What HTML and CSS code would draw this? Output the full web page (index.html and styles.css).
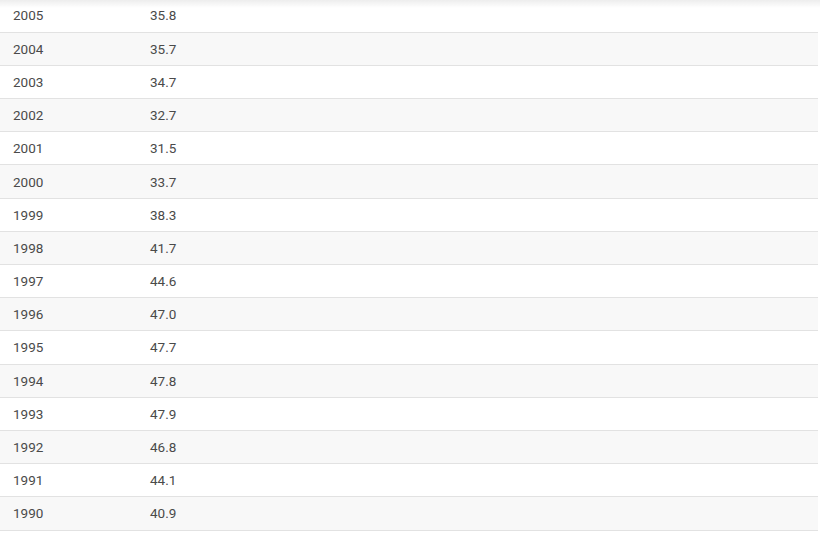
FILE: index.html
```html
<!DOCTYPE html>
<html>
<head>
<meta charset="utf-8">
<link rel="stylesheet" href="styles.css">
</head>
<body>
<div class="topshadow"></div>
<table class="data">
<tbody>
<tr><td class="year">2005</td><td>35.8</td><td class="fill"></td></tr>
<tr><td class="year">2004</td><td>35.7</td><td class="fill"></td></tr>
<tr><td class="year">2003</td><td>34.7</td><td class="fill"></td></tr>
<tr><td class="year">2002</td><td>32.7</td><td class="fill"></td></tr>
<tr><td class="year">2001</td><td>31.5</td><td class="fill"></td></tr>
<tr><td class="year">2000</td><td>33.7</td><td class="fill"></td></tr>
<tr><td class="year">1999</td><td>38.3</td><td class="fill"></td></tr>
<tr><td class="year">1998</td><td>41.7</td><td class="fill"></td></tr>
<tr><td class="year">1997</td><td>44.6</td><td class="fill"></td></tr>
<tr><td class="year">1996</td><td>47.0</td><td class="fill"></td></tr>
<tr><td class="year">1995</td><td>47.7</td><td class="fill"></td></tr>
<tr><td class="year">1994</td><td>47.8</td><td class="fill"></td></tr>
<tr><td class="year">1993</td><td>47.9</td><td class="fill"></td></tr>
<tr><td class="year">1992</td><td>46.8</td><td class="fill"></td></tr>
<tr><td class="year">1991</td><td>44.1</td><td class="fill"></td></tr>
<tr><td class="year">1990</td><td>40.9</td><td class="fill"></td></tr>
</tbody>
</table>
</body>
</html>
```
FILE: styles.css
```css
html, body {
  margin: 0;
  padding: 0;
  background: #ffffff;
}
body {
  font-family: Roboto, "Liberation Sans", sans-serif;
  font-size: 13.5px;
  color: #4a4a4a;
  position: relative;
}
.topshadow {
  position: absolute;
  left: 0;
  top: 0;
  width: 820px;
  height: 8px;
  background: linear-gradient(to bottom, rgba(0,0,0,0.07), rgba(0,0,0,0));
  pointer-events: none;
}
.data {
  width: 818px;
  margin-top: -1px;
  border-collapse: collapse;
  table-layout: fixed;
}
.data tr {
  height: 33.2px;
  border-bottom: 1px solid #e2e2e2;
}
.data tr:nth-child(even) {
  background: #f8f8f8;
}
.data td {
  padding: 0;
  vertical-align: middle;
  line-height: 16px;
}
.data td.year {
  width: 150px;
  padding-left: 13px;
  box-sizing: border-box;
}
.data td:nth-child(2) {
  width: 120px;
}
```
